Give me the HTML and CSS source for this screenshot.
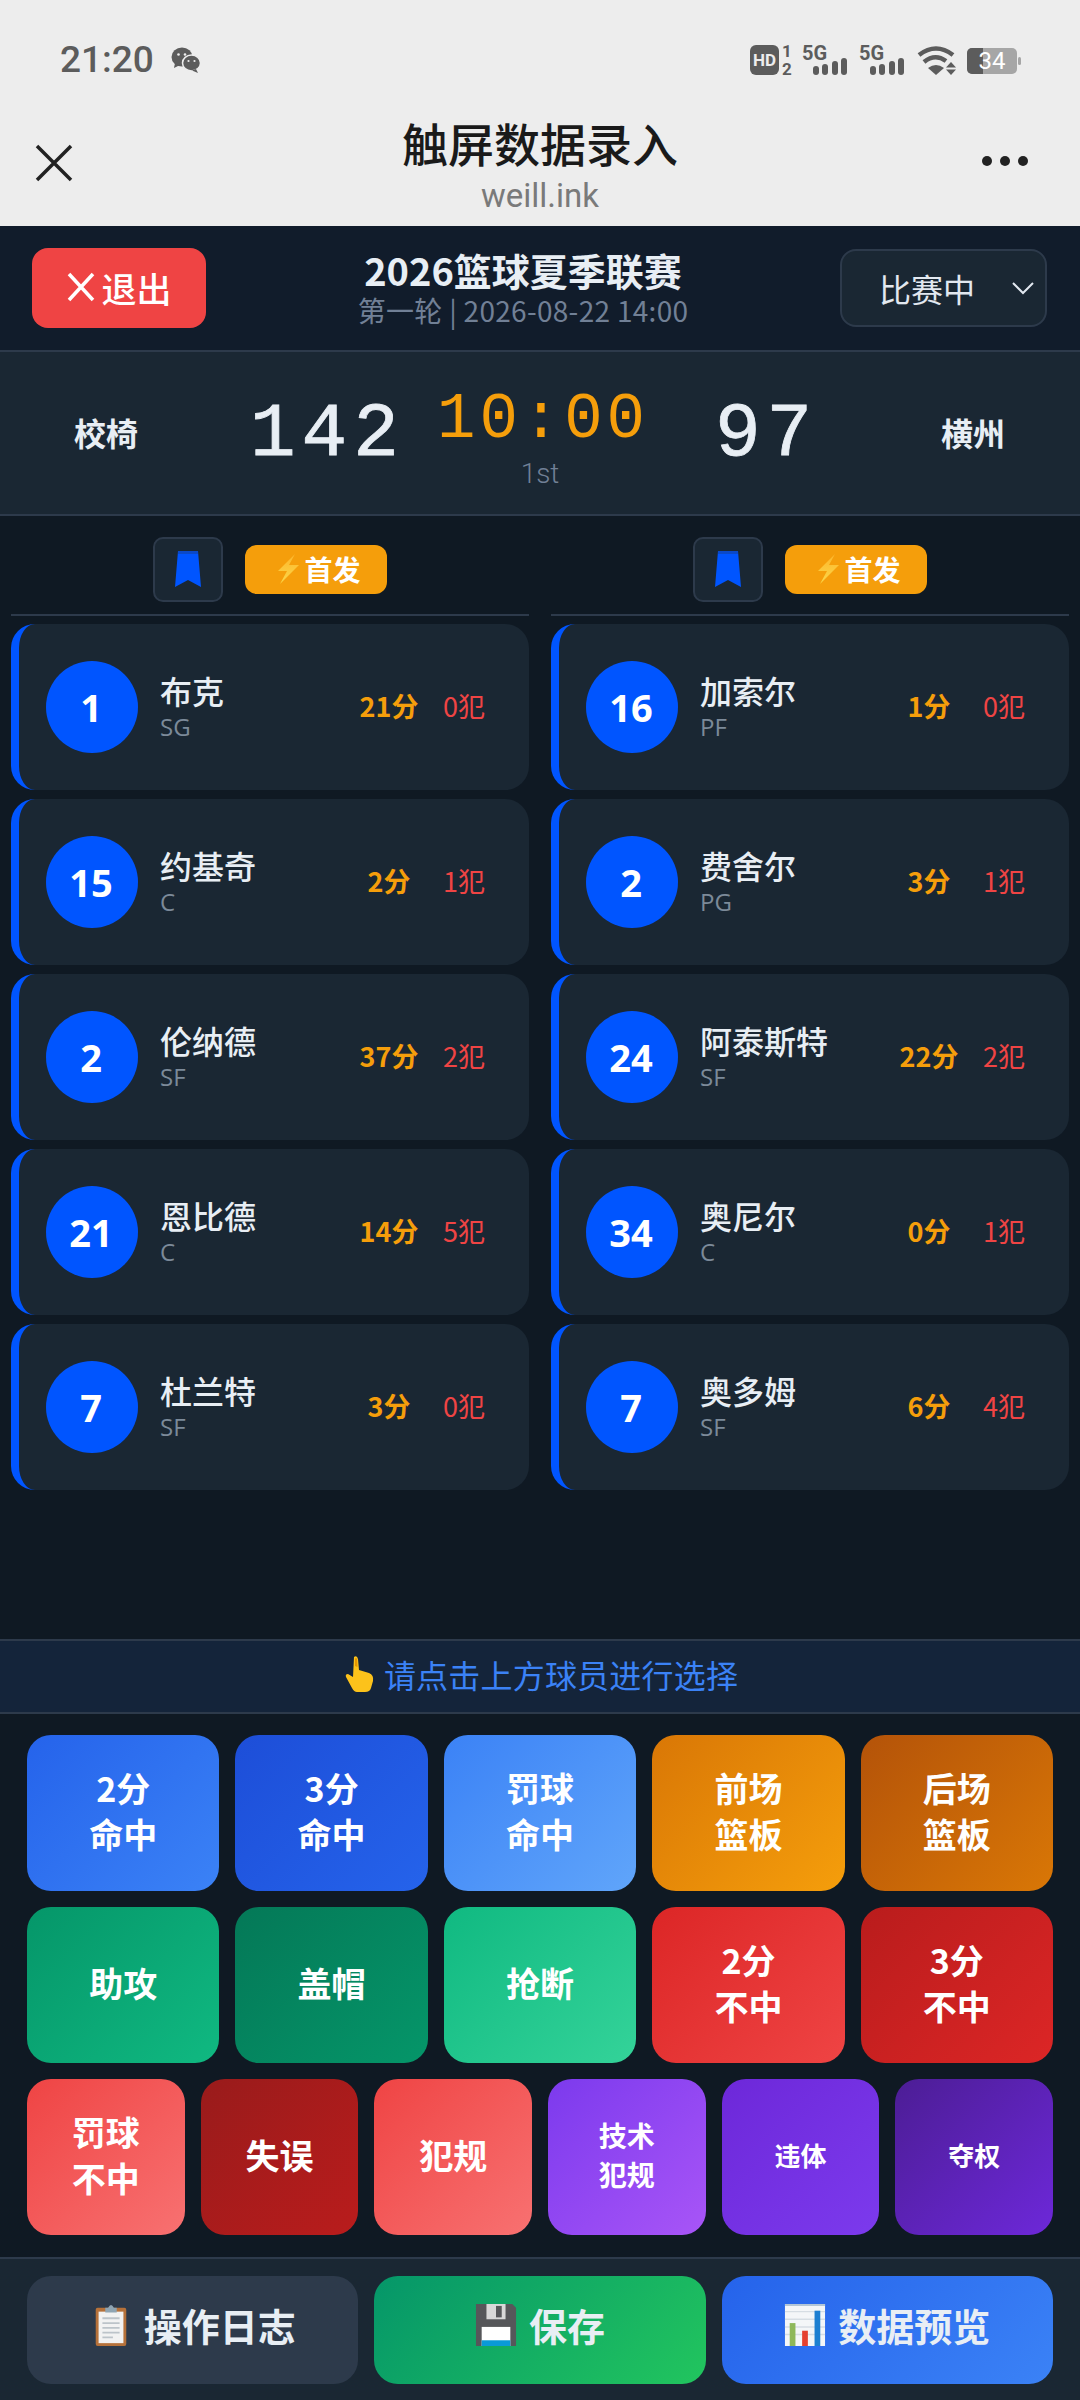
FILE: index.html
```html
<!DOCTYPE html>
<html lang="zh">
<head>
<meta charset="utf-8">
<title>触屏数据录入</title>
<link rel="stylesheet" href="styles.css">
</head>
<body>
<svg class="defs" width="0" height="0" aria-hidden="true">
  <defs><linearGradient id="boltg" x1="0" y1="0" x2="0" y2="1"><stop offset="0" stop-color="#fdb52a"/><stop offset="1" stop-color="#fbd84a"/></linearGradient></defs>
  <symbol id="bolt" viewBox="0 0 24 30"><path d="M19 0 L2 17 L11 17 L4 30 L23 11 L13 11 Z" fill="url(#boltg)"/></symbol>
  <symbol id="ribbon" viewBox="0 0 26 36"><path d="M3 0H23L26 36L13 29L0 36Z" fill="#0055ff"/><path d="M3 0H23V3H3Z" fill="#0a49c9"/></symbol>
</svg>
<div class="page">
  <div class="statusbar">
    <div class="status-left">
      <span class="time">21:20</span>
      <svg class="wechat" viewBox="0 0 30 26" width="30" height="26"><ellipse cx="11" cy="10" rx="10.500" ry="9.500" fill="#5c5c5c"/><path d="M4 16 L3 21 L9 18Z" fill="#5c5c5c"/><ellipse cx="20.500" cy="16" rx="9" ry="8" fill="#5c5c5c" stroke="#ededed" stroke-width="1.500"/><path d="M25 22 L27 26 L21 23.500Z" fill="#5c5c5c"/><circle cx="7.500" cy="7.500" r="1.300" fill="#ededed"/><circle cx="14" cy="7.500" r="1.300" fill="#ededed"/><circle cx="17.500" cy="14" r="1.100" fill="#ededed"/><circle cx="23.500" cy="14" r="1.100" fill="#ededed"/></svg>
    </div>
    <svg class="status-icons" viewBox="0 0 272 40" width="272" height="40">
      <rect x="0" y="5" width="29" height="30" rx="6" fill="#5c5c5c"/>
      <text x="14.500" y="26" class="si-hd" text-anchor="middle">HD</text>
      <text x="37" y="17" class="si-num" text-anchor="middle">1</text>
      <text x="37" y="35" class="si-num" text-anchor="middle">2</text>
      <text x="52" y="20" class="si-5g">5G</text>
      <text x="109" y="20" class="si-5g">5G</text>
      <g fill="#5c5c5c">
        <rect x="63" y="26" width="6" height="9" rx="3"/><rect x="72" y="24" width="6" height="11" rx="3"/><rect x="82" y="21" width="6" height="14" rx="3"/><rect x="91" y="18" width="6" height="17" rx="3"/>
        <rect x="120" y="26" width="6" height="9" rx="3"/><rect x="129" y="24" width="6" height="11" rx="3"/><rect x="139" y="21" width="6" height="14" rx="3"/><rect x="148" y="18" width="6" height="17" rx="3"/>
        <path d="M186 35 L178 28 Q186 22 194 28Z"/>
        <path d="M196 27.500 L206 27.500 L201 22Z"/><path d="M196 29.500 H206 L201 35Z"/>
      </g>
      <g fill="none" stroke="#5c5c5c" stroke-width="4.500">
        <path d="M169 15 Q186 2 203 15"/>
        <path d="M174 22 Q185 13 196 21"/>
      </g>
      <rect x="217" y="8" width="50" height="26" rx="5" fill="#a6a6a6"/>
      <rect x="268" y="17" width="3" height="8" rx="1.500" fill="#a6a6a6"/>
      <path d="M222 8H233V34H222A5 5 0 0 1 217 29V13A5 5 0 0 1 222 8Z" fill="#5c5c5c"/>
      <text x="242" y="29" class="si-batt" text-anchor="middle">34</text>
    </svg>
  </div>
  <div class="navbar">
    <svg class="nav-close" viewBox="0 0 40 40" width="40" height="40"><path d="M3 3L37 37M37 3L3 37" stroke="#222" stroke-width="3.500" fill="none"/></svg>
    <div class="nav-title">
      <div class="nav-main">触屏数据录入</div>
      <div class="nav-url">weill.ink</div>
    </div>
    <div class="nav-more"><i></i><i></i><i></i></div>
  </div>
  <div class="app">
    <header class="head">
      <div class="exit">
        <svg viewBox="0 0 30 30" width="30" height="30"><path d="M3 2L27 28M27 2L3 28" stroke="#fff" stroke-width="3.500" fill="none"/></svg>
        <span>退出</span>
      </div>
      <div class="head-mid">
        <div class="league">2026篮球夏季联赛</div>
        <div class="round">第一轮 | 2026-08-22 14:00</div>
      </div>
      <div class="state">
        <span>比赛中</span>
        <svg viewBox="0 0 24 14" width="24" height="14"><path d="M2 2L12 12L22 2" stroke="#e2e8f0" stroke-width="2" fill="none"/></svg>
      </div>
    </header>
    <section class="score">
      <div class="team team-l">校椅</div>
      <div class="pts pts-l">142</div>
      <div class="clock">
        <div class="timer">10:00</div>
        <div class="period">1st</div>
      </div>
      <div class="pts pts-r">97</div>
      <div class="team team-r">横州</div>
    </section>
    <section class="roster">
      <div class="col">
        <div class="col-head">
          <div class="rb"><svg width="26" height="36"><use href="#ribbon"/></svg></div>
          <div class="starter"><svg width="24" height="30"><use href="#bolt"/></svg><span>首发</span></div>
        </div>
        <div class="card"><div class="num">1</div><div class="who"><div class="name">布克</div><div class="pos">SG</div></div><div class="p">21分</div><div class="f">0犯</div></div>
        <div class="card"><div class="num">15</div><div class="who"><div class="name">约基奇</div><div class="pos">C</div></div><div class="p">2分</div><div class="f">1犯</div></div>
        <div class="card"><div class="num">2</div><div class="who"><div class="name">伦纳德</div><div class="pos">SF</div></div><div class="p">37分</div><div class="f">2犯</div></div>
        <div class="card"><div class="num">21</div><div class="who"><div class="name">恩比德</div><div class="pos">C</div></div><div class="p">14分</div><div class="f">5犯</div></div>
        <div class="card"><div class="num">7</div><div class="who"><div class="name">杜兰特</div><div class="pos">SF</div></div><div class="p">3分</div><div class="f">0犯</div></div>
      </div>
      <div class="col">
        <div class="col-head">
          <div class="rb"><svg width="26" height="36"><use href="#ribbon"/></svg></div>
          <div class="starter"><svg width="24" height="30"><use href="#bolt"/></svg><span>首发</span></div>
        </div>
        <div class="card"><div class="num">16</div><div class="who"><div class="name">加索尔</div><div class="pos">PF</div></div><div class="p">1分</div><div class="f">0犯</div></div>
        <div class="card"><div class="num">2</div><div class="who"><div class="name">费舍尔</div><div class="pos">PG</div></div><div class="p">3分</div><div class="f">1犯</div></div>
        <div class="card"><div class="num">24</div><div class="who"><div class="name">阿泰斯特</div><div class="pos">SF</div></div><div class="p">22分</div><div class="f">2犯</div></div>
        <div class="card"><div class="num">34</div><div class="who"><div class="name">奥尼尔</div><div class="pos">C</div></div><div class="p">0分</div><div class="f">1犯</div></div>
        <div class="card"><div class="num">7</div><div class="who"><div class="name">奥多姆</div><div class="pos">SF</div></div><div class="p">6分</div><div class="f">4犯</div></div>
      </div>
    </section>
    <div class="hint">
      <svg viewBox="0 0 34 38" width="34" height="38"><path d="M12 2 Q15 0 16 4 L17 15 L27 18 Q32 20 31 26 L29 33 Q28 37 23 37 L15 37 Q12 37 10 33 L4 22 Q3 19 6 19 L11 22 Z" fill="#fcc21b"/><path d="M13 4 Q14 2 15 4 L15.500 12 L13 11Z" fill="#e59600"/></svg>
      <span>请点击上方球员进行选择</span>
    </div>
    <section class="actions">
      <div class="row">
        <div class="btn g1">2分<br>命中</div>
        <div class="btn g2">3分<br>命中</div>
        <div class="btn g3">罚球<br>命中</div>
        <div class="btn g4">前场<br>篮板</div>
        <div class="btn g5">后场<br>篮板</div>
      </div>
      <div class="row">
        <div class="btn g6">助攻</div>
        <div class="btn g7">盖帽</div>
        <div class="btn g8">抢断</div>
        <div class="btn g9">2分<br>不中</div>
        <div class="btn g10">3分<br>不中</div>
      </div>
      <div class="row">
        <div class="btn g11">罚球<br>不中</div>
        <div class="btn g12">失误</div>
        <div class="btn g13">犯规</div>
        <div class="btn g14 sm">技术<br>犯规</div>
        <div class="btn g15 xs">违体</div>
        <div class="btn g16 xs">夺权</div>
      </div>
    </section>
    <footer class="foot">
      <div class="fbtn f-log">
        <svg viewBox="0 0 32 44" width="32" height="42"><rect x="0" y="4" width="32" height="40" rx="2" fill="#b5713a"/><rect x="3" y="8" width="26" height="33" fill="#f2f2f2"/><path d="M7 15H25M7 20H25M7 25H25M7 30H25M7 35H18" stroke="#bcc3c9" stroke-width="2"/><path d="M10 9V4H13Q16 -2 19 4H22V9Z" fill="#8fa5b3"/></svg>
        <span>操作日志</span>
      </div>
      <div class="fbtn f-save">
        <svg viewBox="0 0 42 44" width="42" height="42"><path d="M0 0H38L42 4V44H0Z" fill="#56575a"/><rect x="11" y="0" width="20" height="16" fill="#d8d8d8"/><rect x="21" y="2" width="6" height="12" fill="#56575a"/><rect x="6" y="24" width="30" height="20" fill="#fff"/><rect x="6" y="38" width="30" height="6" fill="#0a9ad8"/></svg>
        <span>保存</span>
      </div>
      <div class="fbtn f-view">
        <svg viewBox="0 0 42 44" width="42" height="42"><rect width="42" height="44" fill="#f4f6f8"/><path d="M0 8H42M0 16H42M0 24H42M0 32H42" stroke="#d6dde3" stroke-width="1.500"/><rect x="5" y="20" width="6" height="24" fill="#8fb85a"/><rect x="18" y="28" width="6" height="16" fill="#e5402f"/><rect x="31" y="7" width="6" height="37" fill="#1d7fd1"/><path d="M0 0H42V2H0Z" fill="#b4c6d6"/></svg>
        <span>数据预览</span>
      </div>
    </footer>
  </div>
</div>
</body>
</html>
```

FILE: styles.css
```css
* { box-sizing: border-box; }
html, body { margin: 0; padding: 0; }
body {
  width: 1080px;
  height: 2400px;
  overflow: hidden;
  font-family: "Noto Sans CJK SC", "Noto Sans", sans-serif;
  background: #0f1923;
}
.defs { position: absolute; }
.page { width: 1080px; height: 2400px; display: flex; flex-direction: column; }

.statusbar {
  height: 100px;
  flex: none;
  background: #ededed;
  display: flex;
  justify-content: space-between;
  align-items: flex-start;
  padding: 40px 60px 0 60px;
}
.status-left { display: flex; align-items: center; gap: 17px; }
.time {
  font-family: Roboto, sans-serif;
  font-size: 37px;
  line-height: 40px;
  font-weight: 500;
  color: #5c5c5c;
}
.wechat { display: block; }
.status-icons { display: block; margin-right: -2px; }
.si-hd { font: 700 17px Roboto, sans-serif; fill: #ededed; }
.si-num { font: 700 17px Roboto, sans-serif; fill: #5c5c5c; }
.si-5g { font: 700 20px Roboto, sans-serif; fill: #5c5c5c; }
.si-batt { font: 400 24px Roboto, sans-serif; fill: #ffffff; }

.navbar {
  height: 126px;
  flex: none;
  background: #ededed;
  display: grid;
  grid-template-columns: 1fr auto 1fr;
  padding: 0 52px;
}
.nav-close { align-self: start; margin: 43px 0 0 -18px; }
.nav-title { text-align: center; }
.nav-main {
  font-size: 46px;
  line-height: 58px;
  margin-top: 13px;
  font-weight: 500;
  color: #1a1a1a;
}
.nav-url {
  font-family: Roboto, sans-serif;
  font-size: 33px;
  line-height: 40px;
  margin-top: 5px;
  color: #7a7a7a;
}
.nav-more {
  justify-self: end;
  display: flex;
  gap: 8px;
  margin-top: 56px;
  align-self: start;
}
.nav-more i { width: 10px; height: 10px; border-radius: 50%; background: #222; display: block; }

.app {
  flex: 1;
  display: flex;
  flex-direction: column;
  background: #0f1923;
  min-height: 0;
}

.head {
  height: 124px;
  flex: none;
  background: #111c2b;
  padding: 22px 33px 0 32px;
  display: grid;
  grid-template-columns: 174px 1fr 207px;
  align-items: start;
}
.exit {
  height: 80px;
  background: #ef4444;
  border-radius: 16px;
  display: flex;
  align-items: center;
  justify-content: center;
  gap: 5px;
  color: #fff;
  font-size: 35px;
  font-weight: 500;
  padding-bottom: 2px;
}
.head-mid { text-align: center; }
.league {
  font-size: 38px;
  line-height: 44px;
  margin-top: 0;
  font-weight: 700;
  color: #e8eef4;
}
.round { font-size: 28px; line-height: 34px; margin-top: 1px; letter-spacing: 0.3px; color: #718096; }
.state {
  height: 78px;
  margin-top: 1px;
  background: #1a2733;
  border: 2px solid #2d3a4b;
  border-radius: 16px;
  display: flex;
  align-items: center;
  padding: 0 10px 0 37px;
  justify-content: space-between;
  color: #e2e8f0;
  font-size: 32px;
}

.score {
  height: 166px;
  flex: none;
  background: #1a2733;
  border-top: 2px solid #2d3a4b;
  border-bottom: 2px solid #2d3a4b;
  display: grid;
  grid-template-columns: 212px 208px 240px 188px 232px;
  align-items: start;
  color: #e8eef4;
}
.team { font-size: 32px; line-height: 40px; font-weight: 700; text-align: center; margin-top: 60px; }
.team-r { padding-left: 18px; }
.pts {
  font-family: "Liberation Mono", monospace;
  font-size: 76px;
  line-height: 90px;
  letter-spacing: 6px;
  margin-top: 38px;
  -webkit-text-stroke: 0.8px #e8eef4;
}
.pts-l { padding-left: 38px; }
.pts-r { padding-left: 55px; }
.clock { text-align: center; }
.timer {
  font-family: "Liberation Mono", monospace;
  font-size: 64px;
  line-height: 72px;
  letter-spacing: 4px;
  color: #f59e0b;
  margin-top: 32px;
  padding-left: 6px;
}
.period { font-family: Roboto, sans-serif; font-weight: 300; font-size: 28px; line-height: 32px; color: #718096; margin-top: 2px; }

.roster {
  flex: 1;
  display: grid;
  grid-template-columns: 518px 518px;
  column-gap: 22px;
  padding: 0 11px;
  align-content: start;
  min-height: 0;
}
.col { display: flex; flex-direction: column; gap: 9px; }
.col-head {
  height: 100px;
  border-bottom: 2px solid #2d3a4b;
  display: flex;
  align-items: center;
  padding: 8px 0 0 142px;
  gap: 22px;
  margin-bottom: -1px;
}
.rb {
  width: 70px;
  height: 65px;
  background: #1a2733;
  border: 2px solid #2d3a4b;
  border-radius: 10px;
  display: flex;
  align-items: center;
  justify-content: center;
}
.rb svg { display: block; }
.starter {
  width: 142px;
  height: 49px;
  background: #f59e0b;
  border-radius: 12px;
  display: flex;
  align-items: center;
  justify-content: center;
  color: #fff;
  font-size: 28px;
  font-weight: 700;
  gap: 4px;
  padding-left: 5px;
}
.starter svg { display: block; }
.card {
  height: 166px;
  background: #1a2733;
  border-radius: 24px;
  border-left: 8px solid #0055ff;
  display: flex;
  align-items: center;
  padding: 0 28px 0 27px;
}
.num {
  width: 92px;
  height: 92px;
  flex: none;
  border-radius: 50%;
  background: #0055ff;
  color: #fff;
  display: flex;
  align-items: center;
  justify-content: center;
  font-family: "Open Sans", sans-serif;
  font-size: 38px;
  font-weight: 700;
  padding-right: 2px;
}
.who { flex: 1; margin-left: 22px; }
.name { font-size: 32px; line-height: 38px; font-weight: 500; color: #e8eef4; }
.pos { font-family: "Open Sans", sans-serif; font-size: 24px; line-height: 32px; color: #7c8a99; padding-top: 2px; }
.p { width: 80px; text-align: center; color: #f59e0b; font-size: 27px; font-weight: 700; padding-bottom: 3px; }
.f { width: 70px; text-align: center; color: #ef4444; font-size: 27px; padding-bottom: 3px; margin-right: 2px; }

.hint {
  height: 75px;
  flex: none;
  background: #14243a;
  border-top: 2px solid #2d3a4b;
  border-bottom: 2px solid #2d3a4b;
  display: flex;
  align-items: center;
  justify-content: center;
  gap: 8px;
  color: #3b82f6;
  font-size: 32px;
  letter-spacing: 0.2px;
  padding-bottom: 5px;
}

.actions {
  flex: none;
  padding: 21px 27px 22px;
  display: flex;
  flex-direction: column;
  gap: 16px;
}
.row { display: flex; gap: 16px; }
.btn {
  flex: 1 1 0;
  height: 156px;
  border-radius: 24px;
  display: flex;
  align-items: center;
  justify-content: center;
  text-align: center;
  color: #fff;
  font-size: 34px;
  line-height: 46px;
  font-weight: 700;
  padding-bottom: 5px;
}
.btn.sm { font-size: 28px; line-height: 39px; }
.btn.xs { font-size: 26px; }
.g1 { background: linear-gradient(135deg, #2563eb, #3b82f6); }
.g2 { background: linear-gradient(135deg, #1d4ed8, #2563eb); }
.g3 { background: linear-gradient(135deg, #3b82f6, #60a5fa); }
.g4 { background: linear-gradient(135deg, #d97706, #f59e0b); }
.g5 { background: linear-gradient(135deg, #b45309, #d97706); }
.g6 { background: linear-gradient(135deg, #059669, #10b981); }
.g7 { background: linear-gradient(135deg, #047857, #059669); }
.g8 { background: linear-gradient(135deg, #10b981, #34d399); }
.g9 { background: linear-gradient(135deg, #dc2626, #ef4444); }
.g10 { background: linear-gradient(135deg, #b91c1c, #dc2626); }
.g11 { background: linear-gradient(135deg, #ef4444, #f87171); }
.g12 { background: linear-gradient(135deg, #991b1b, #b91c1c); }
.g13 { background: linear-gradient(135deg, #ef4444, #f87171); }
.g14 { background: linear-gradient(135deg, #7c3aed, #a855f7); }
.g15 { background: linear-gradient(135deg, #6d28d9, #7c3aed); }
.g16 { background: linear-gradient(135deg, #4c1d95, #6d28d9); }

.foot {
  flex: none;
  height: 143px;
  background: #1a2733;
  border-top: 2px solid #2d3a4b;
  padding: 17px 27px 16px;
  display: flex;
  gap: 16px;
}
.fbtn {
  flex: 1 1 0;
  border-radius: 24px;
  display: flex;
  align-items: center;
  justify-content: center;
  gap: 12px;
  font-size: 38px;
  font-weight: 700;
  color: #e8eef4;
  padding-bottom: 11px;
}
.f-log svg { margin: 0 5px; }
.f-log { background: #2d3a4b; }
.f-save { background: linear-gradient(135deg, #059669, #22c55e); }
.f-view { background: linear-gradient(135deg, #2563eb, #3b82f6); }
```
